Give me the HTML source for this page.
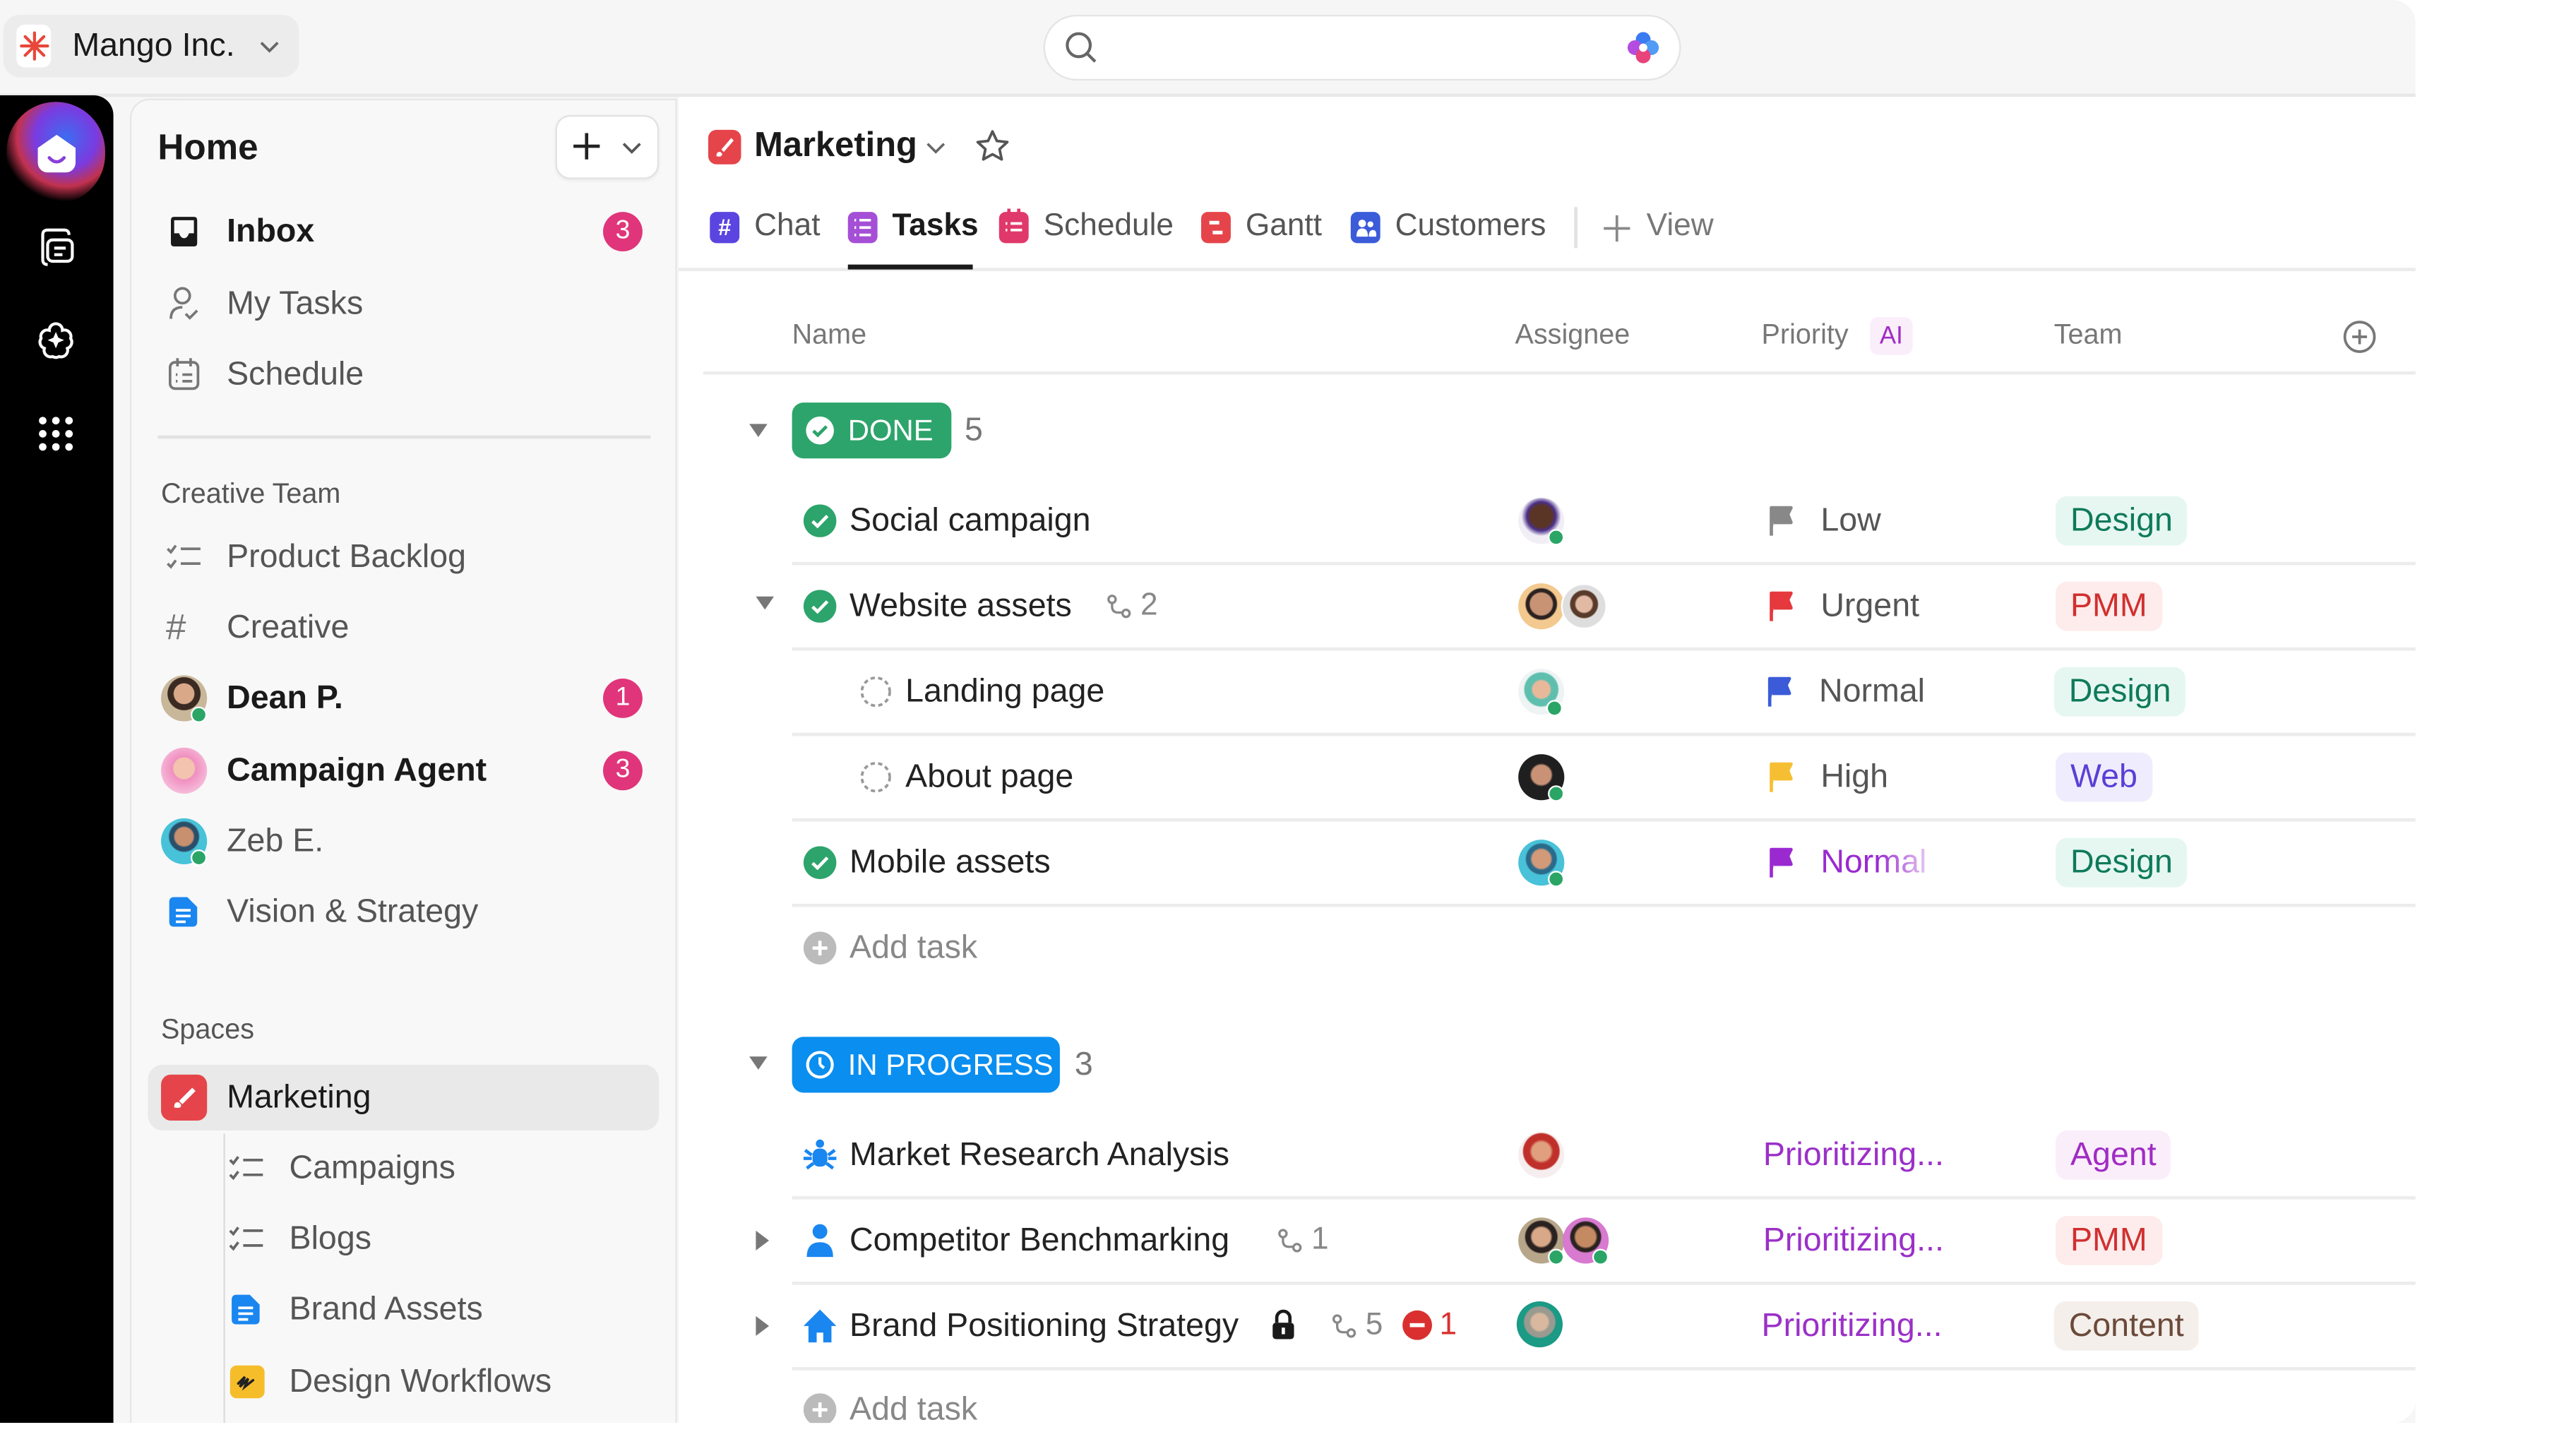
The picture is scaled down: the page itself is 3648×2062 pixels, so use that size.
<!DOCTYPE html>
<html><head><meta charset="utf-8"><style>
*{box-sizing:border-box;margin:0;padding:0}
html,body{width:3648px;height:2052px;overflow:hidden;background:#fff}
#s{position:absolute;left:0;top:0;width:1570px;height:882px;transform:scale(2.327);transform-origin:0 0;font-family:"Liberation Sans",sans-serif;color:#222}
.a{position:absolute}
.t{position:absolute;line-height:30px;height:30px;white-space:nowrap}
.sb{font-size:20px;color:#555}
.mn{font-size:20px;color:#222}
.badge{position:absolute;width:24px;height:24px;border-radius:12px;background:#e0357a;color:#fff;font-size:16px;line-height:24px;text-align:center}
.hl{position:absolute;height:2px;background:#ececec}
.tag{position:absolute;height:30px;line-height:30px;border-radius:7px;padding:0 9px;font-size:20px}
.av{position:absolute;width:28px;height:28px;border-radius:14px}
.on{position:absolute;width:10px;height:10px;border-radius:5px;background:#2aa566;border:1.5px solid #fff}
.pr{font-size:20px;color:#9b30c8}
</style></head><body><div id="s">
<div class="a" style="left:0;top:0;width:1470px;height:866px;background:#f6f6f6;border-top-right-radius:14px"></div>
<div class="a" style="left:2px;top:9px;width:180px;height:38px;background:#ececec;border-radius:10px"></div>
<div class="a" style="left:10px;top:15px;width:21px;height:26px;background:#fff;border-radius:5px"></div>
<svg class="a" style="left:12px;top:19px" width="18" height="18" viewBox="0 0 18 18"><g stroke="#e8473a" stroke-width="1.8" stroke-linecap="round"><path d="M9 1v16M1 9h16M3.3 3.3l11.4 11.4M14.7 3.3L3.3 14.7"/></g></svg>
<div class="t" style="left:44px;top:13px;font-size:20px;color:#1a1a1a">Mango Inc.</div>
<svg class="a" style="left:157px;top:24px" width="14" height="9" viewBox="0 0 14 9"><path d="M2 2l5 5 5-5" stroke="#666" stroke-width="1.6" fill="none"/></svg>
<div class="a" style="left:635px;top:9px;width:388px;height:40px;background:#fff;border:1px solid #e4e4e4;border-radius:20px"></div>
<svg class="a" style="left:647px;top:18px" width="22" height="22" viewBox="0 0 22 22"><circle cx="9.5" cy="9.5" r="7" stroke="#666" stroke-width="1.8" fill="none"/><path d="M14.5 14.5l5 5" stroke="#666" stroke-width="1.8"/></svg>
<svg class="a" style="left:989px;top:18px" width="22" height="22" viewBox="0 0 22 22"><circle cx="11" cy="6" r="4.5" fill="#3a7bf2"/><circle cx="6" cy="11" r="4.5" fill="#b44ce0"/><circle cx="16" cy="11" r="4.5" fill="#4f9bf5"/><circle cx="11" cy="16" r="4.5" fill="#e8437b"/><circle cx="11" cy="11" r="2.5" fill="#fff"/></svg>
<div class="hl" style="left:0;top:57px;width:1470px;background:#e8e8e8"></div>
<div class="a" style="left:0;top:58px;width:69px;height:808px;background:#000;border-top-right-radius:12px"></div>
<div class="a" style="left:4px;top:62px;width:60px;height:62px;border-radius:30px;background:radial-gradient(circle at 60% 35%,#3d6cf0 0%,#7a3be0 35%,#c2324f 55%,rgba(0,0,0,0) 72%)"></div>
<div class="a" style="left:23px;top:82px;width:23px;height:23px;background:#fff;border-radius:5px 5px 6px 6px;clip-path:polygon(50% 0,100% 35%,100% 100%,0 100%,0 35%)"></div>
<svg class="a" style="left:27px;top:94px" width="15" height="8" viewBox="0 0 15 8"><path d="M3 2q4.5 5 9 0" stroke="#8a3fd8" stroke-width="2" fill="none" stroke-linecap="round"/></svg>
<svg class="a" style="left:21px;top:137px" width="26" height="28" viewBox="0 0 26 28"><path d="M5 21V6q0-3 3-3h10q3 0 3 3" stroke="#fff" stroke-width="1.8" fill="none"/><rect x="8" y="9" width="15" height="13" rx="3" stroke="#fff" stroke-width="1.8" fill="none"/><path d="M12 14h7M12 18h5" stroke="#fff" stroke-width="1.8"/><path d="M5 21q0 3 3 3" stroke="#fff" stroke-width="1.8" fill="none"/></svg>
<svg class="a" style="left:21px;top:194px" width="26" height="26" viewBox="0 0 26 26"><path d="M13 3a4 4 0 0 1 4 4 4 4 0 0 1 5 5 4 4 0 0 1-2 6 4 4 0 0 1-5 5 4 4 0 0 1-4 0 4 4 0 0 1-5-5 4 4 0 0 1-2-6 4 4 0 0 1 5-5 4 4 0 0 1 4-4z" stroke="#fff" stroke-width="1.8" fill="none"/><path d="M13 8l1.5 3.5L18 13l-3.5 1.5L13 18l-1.5-3.5L8 13l3.5-1.5z" fill="#fff"/></svg>
<svg class="a" style="left:22px;top:252px" width="24" height="24" viewBox="0 0 24 24" fill="#fff"><circle cx="4" cy="4" r="2.3"/><circle cx="12" cy="4" r="2.3"/><circle cx="20" cy="4" r="2.3"/><circle cx="4" cy="12" r="2.3"/><circle cx="12" cy="12" r="2.3"/><circle cx="20" cy="12" r="2.3"/><circle cx="4" cy="20" r="2.3"/><circle cx="12" cy="20" r="2.3"/><circle cx="20" cy="20" r="2.3"/></svg>
<div class="a" style="left:79px;top:60px;width:333px;height:806px;background:#f8f8f8;border:1px solid #e6e6e6;border-bottom:none;border-top-left-radius:12px"></div>
<div class="t" style="left:96px;top:75px;font-size:22px;font-weight:bold;color:#1a1a1a">Home</div>
<div class="a" style="left:338px;top:70px;width:63px;height:39px;background:#fff;border:1px solid #e2e2e2;border-radius:9px;box-shadow:0 1px 2px rgba(0,0,0,.06)"></div>
<svg class="a" style="left:348px;top:80px" width="18" height="18" viewBox="0 0 18 18"><path d="M9 1v16M1 9h16" stroke="#222" stroke-width="2"/></svg>
<svg class="a" style="left:378px;top:86px" width="13" height="8" viewBox="0 0 13 8"><path d="M1.5 1.5l5 5 5-5" stroke="#555" stroke-width="1.6" fill="none"/></svg>
<svg class="a" style="left:102px;top:131px" width="20" height="20" viewBox="0 0 20 20"><path d="M4 1h12q2 0 2 2v14q0 2-2 2H4q-2 0-2-2V3q0-2 2-2z" fill="#1a1a1a"/><path d="M4 3h12v8h-3q-1 3-3 3t-3-3H4z" fill="#f8f8f8"/></svg>
<div class="t" style="left:138px;top:126px;font-size:20px;font-weight:bold;color:#1a1a1a">Inbox</div>
<div class="badge" style="left:367px;top:129px">3</div>
<svg class="a" style="left:102px;top:174px" width="20" height="22" viewBox="0 0 20 22"><circle cx="9" cy="6" r="4.5" stroke="#777" stroke-width="1.6" fill="none"/><path d="M2 20q0-7 7-7" stroke="#777" stroke-width="1.6" fill="none"/><path d="M11 17l2.5 2.5L18 15" stroke="#777" stroke-width="1.6" fill="none"/></svg>
<div class="t sb" style="left:138px;top:170px">My Tasks</div>
<svg class="a" style="left:102px;top:217px" width="20" height="22" viewBox="0 0 20 22"><rect x="1.5" y="3.5" width="17" height="16" rx="3" stroke="#777" stroke-width="1.6" fill="none"/><path d="M6 1v5M14 1v5M5 11h1M9 11h6M5 15h1M9 15h6" stroke="#777" stroke-width="1.6"/></svg>
<div class="t sb" style="left:138px;top:213px">Schedule</div>
<div class="hl" style="left:96px;top:265px;width:300px;height:1.5px;background:#e2e2e2"></div>
<div class="t" style="left:98px;top:286px;font-size:17px;color:#555">Creative Team</div>
<svg class="a" style="left:101px;top:330px" width="22" height="18" viewBox="0 0 22 18"><path d="M1 4l2 2 3-4M1 13l2 2 3-4M9 4h12M9 13h12" stroke="#777" stroke-width="1.6" fill="none"/></svg>
<div class="t sb" style="left:138px;top:324px">Product Backlog</div>
<div class="t" style="left:101px;top:367px;font-size:22px;color:#777">#</div>
<div class="t sb" style="left:138px;top:367px">Creative</div>
<div class="av" style="left:98px;top:411px;background:radial-gradient(circle at 50% 40%,#d9a888 0 28%,#3a2a22 30% 45%,#c9b79a 47%)"></div>
<div class="on" style="left:116px;top:430px"></div>
<div class="t" style="left:138px;top:410px;font-size:20px;font-weight:bold;color:#1a1a1a">Dean P.</div>
<div class="badge" style="left:367px;top:413px">1</div>
<div class="av" style="left:98px;top:455px;background:radial-gradient(circle at 50% 45%,#f3c3b0 0 30%,#f08fc0 34%,#f6b8d8 70%)"></div>
<div class="t" style="left:138px;top:454px;font-size:20px;font-weight:bold;color:#1a1a1a">Campaign Agent</div>
<div class="badge" style="left:367px;top:457px">3</div>
<div class="av" style="left:98px;top:498px;background:radial-gradient(circle at 50% 40%,#c8906e 0 25%,#2a4e6a 30% 40%,#48c2d8 44%)"></div>
<div class="on" style="left:116px;top:517px"></div>
<div class="t sb" style="left:138px;top:497px">Zeb E.</div>
<svg class="a" style="left:102px;top:545px" width="20" height="20" viewBox="0 0 20 20"><path d="M4 1h8l6 6v9q0 3-3 3H4q-3 0-3-3V4q0-3 3-3z" fill="#1a86f0"/><path d="M5 9h9M5 12.5h9M5 16h6" stroke="#fff" stroke-width="1.6"/></svg>
<div class="t sb" style="left:138px;top:540px">Vision &amp; Strategy</div>
<div class="t" style="left:98px;top:612px;font-size:17px;color:#555">Spaces</div>
<div class="a" style="left:90px;top:648px;width:311px;height:40px;background:#e9e9e9;border-radius:9px"></div>
<div class="a" style="left:98px;top:654px;width:28px;height:28px;background:#e5454a;border-radius:6px"></div>
<svg class="a" style="left:102px;top:658px" width="20" height="20" viewBox="0 0 20 20"><path d="M15 4L7 12l2 2 8-8z" fill="#fff"/><path d="M4 16q0-4 3-3l1 1q1 3-4 2z" fill="#fff"/></svg>
<div class="t" style="left:138px;top:653px;font-size:20px;color:#1a1a1a">Marketing</div>
<div class="a" style="left:135.5px;top:690px;width:1.5px;height:176px;background:#dcdcdc"></div>
<svg class="a" style="left:139px;top:702px" width="22" height="18" viewBox="0 0 22 18"><path d="M1 4l2 2 3-4M1 13l2 2 3-4M9 4h12M9 13h12" stroke="#666" stroke-width="1.6" fill="none"/></svg>
<div class="t sb" style="left:176px;top:696px">Campaigns</div>
<svg class="a" style="left:139px;top:745px" width="22" height="18" viewBox="0 0 22 18"><path d="M1 4l2 2 3-4M1 13l2 2 3-4M9 4h12M9 13h12" stroke="#666" stroke-width="1.6" fill="none"/></svg>
<div class="t sb" style="left:176px;top:739px">Blogs</div>
<svg class="a" style="left:140px;top:787px" width="20" height="20" viewBox="0 0 20 20"><path d="M4 1h8l6 6v9q0 3-3 3H4q-3 0-3-3V4q0-3 3-3z" fill="#1a86f0"/><path d="M5 9h9M5 12.5h9M5 16h6" stroke="#fff" stroke-width="1.6"/></svg>
<div class="t sb" style="left:176px;top:782px">Brand Assets</div>
<div class="a" style="left:140px;top:831px;width:21px;height:20px;background:#f6bd2b;border-radius:4px"></div>
<svg class="a" style="left:142px;top:833px" width="17" height="16" viewBox="0 0 17 16"><path d="M3 9l4-4-3 6 5-5-2 5 5-4" stroke="#222" stroke-width="1.5" fill="none" stroke-linecap="round"/></svg>
<div class="t sb" style="left:176px;top:826px">Design Workflows</div>
<div class="a" style="left:413px;top:59px;width:1057px;height:807px;background:#fff;border-bottom-right-radius:14px"></div>
<div class="a" style="left:431px;top:79px;width:20px;height:21px;background:#e5454a;border-radius:5px"></div>
<svg class="a" style="left:433px;top:81px" width="16" height="17" viewBox="0 0 16 17"><path d="M12 3L6 10l1.5 1.5 6-7z" fill="#fff"/><path d="M3 14q0-3 2.5-2.5l1 1q0 2.5-3.5 1.5z" fill="#fff"/></svg>
<div class="t" style="left:459px;top:74px;font-size:21px;font-weight:bold;color:#1a1a1a">Marketing</div>
<svg class="a" style="left:563px;top:86px" width="13" height="8" viewBox="0 0 13 8"><path d="M1.5 1.5l5 5 5-5" stroke="#666" stroke-width="1.5" fill="none"/></svg>
<svg class="a" style="left:593px;top:78px" width="22" height="22" viewBox="0 0 22 22"><path d="M11 2l2.7 5.8 6.3.7-4.7 4.3 1.3 6.2L11 15.9 5.4 19l1.3-6.2L2 8.5l6.3-.7z" stroke="#555" stroke-width="1.6" fill="none" stroke-linejoin="round"/></svg>
<div class="a" style="left:432px;top:129px;width:18px;height:19px;background:#5b45e0;border-radius:4px;color:#fff;font-size:14px;line-height:19px;text-align:center;font-weight:bold">#</div>
<div class="t" style="left:459px;top:123px;font-size:19px;color:#555">Chat</div>
<div class="a" style="left:516px;top:129px;width:18px;height:19px;background:#a54fd6;border-radius:4px"></div>
<svg class="a" style="left:518px;top:131px" width="14" height="15" viewBox="0 0 14 15"><path d="M2 3h1M5 3h7M2 7.5h1M5 7.5h7M2 12h1M5 12h7" stroke="#fff" stroke-width="1.6"/></svg>
<div class="t" style="left:543px;top:123px;font-size:19px;color:#1a1a1a;font-weight:bold">Tasks</div>
<div class="a" style="left:608px;top:129px;width:18px;height:19px;background:#e0386a;border-radius:4px"></div>
<svg class="a" style="left:610px;top:126px" width="14" height="20" viewBox="0 0 14 20"><path d="M4 1v5M10 1v5" stroke="#e0386a" stroke-width="2"/><path d="M2 10h1M5 10h7M2 14h1M5 14h7" stroke="#fff" stroke-width="1.6"/></svg>
<div class="t" style="left:635px;top:123px;font-size:19px;color:#555">Schedule</div>
<div class="a" style="left:731px;top:129px;width:18px;height:19px;background:#e5454a;border-radius:4px"></div>
<svg class="a" style="left:733px;top:131px" width="14" height="15" viewBox="0 0 14 15"><path d="M3 4.5h6M5 10.5h6" stroke="#fff" stroke-width="2.2"/></svg>
<div class="t" style="left:758px;top:123px;font-size:19px;color:#555">Gantt</div>
<div class="a" style="left:822px;top:129px;width:18px;height:19px;background:#3b5bd9;border-radius:4px"></div>
<svg class="a" style="left:824px;top:131px" width="14" height="15" viewBox="0 0 14 15"><circle cx="5" cy="5" r="2.3" fill="#fff"/><path d="M1.5 13q0-5 3.5-5t3.5 5z" fill="#fff"/><circle cx="10" cy="5.5" r="1.8" fill="#fff"/><path d="M9 13q0-4 2.5-4t2 4z" fill="#fff"/></svg>
<div class="t" style="left:849px;top:123px;font-size:19px;color:#555">Customers</div>
<div class="a" style="left:958px;top:126px;width:1.5px;height:25px;background:#e2e2e2"></div>
<svg class="a" style="left:975px;top:130px" width="18" height="18" viewBox="0 0 18 18"><path d="M9 1v16M1 9h16" stroke="#888" stroke-width="1.6"/></svg>
<div class="t" style="left:1002px;top:123px;font-size:19px;color:#777">View</div>
<div class="hl" style="left:413px;top:163px;width:1057px;background:#ebebeb"></div>
<div class="a" style="left:516px;top:161px;width:76px;height:3px;background:#1a1a1a"></div>
<div class="t" style="left:482px;top:189px;font-size:17px;color:#777">Name</div>
<div class="t" style="left:922px;top:189px;font-size:17px;color:#777">Assignee</div>
<div class="t" style="left:1072px;top:189px;font-size:17px;color:#777">Priority</div>
<div class="a" style="left:1138px;top:193px;width:26px;height:23px;background:#fbeefb;border-radius:5px;color:#a02cc3;font-size:15px;line-height:23px;text-align:center">AI</div>
<div class="t" style="left:1250px;top:189px;font-size:17px;color:#777">Team</div>
<svg class="a" style="left:1425px;top:194px" width="22" height="22" viewBox="0 0 22 22"><circle cx="11" cy="11" r="9" stroke="#777" stroke-width="1.6" fill="none"/><path d="M11 6.5v9M6.5 11h9" stroke="#777" stroke-width="1.6"/></svg>
<div class="hl" style="left:428px;top:226px;width:1042px"></div>
<svg class="a" style="left:455px;top:257px" width="13" height="10" viewBox="0 0 13 10"><path d="M1 1h11L6.5 9z" fill="#777"/></svg>
<div class="a" style="left:482px;top:245px;width:97px;height:34px;background:#2da46b;border-radius:7px"></div>
<svg class="a" style="left:490px;top:253px" width="18" height="18" viewBox="0 0 18 18"><circle cx="9" cy="9" r="8.5" fill="#fff"/><path d="M5 9.2l2.7 2.6L13 6.5" stroke="#2da46b" stroke-width="2" fill="none"/></svg>
<div class="t" style="left:516px;top:247px;font-size:18px;color:#fff">DONE</div>
<div class="t" style="left:587px;top:247px;font-size:20px;color:#777">5</div>
<svg width="0" height="0" style="position:absolute"><defs><symbol id="ck" viewBox="0 0 20 20"><circle cx="10" cy="10" r="10" fill="#2da46b"/><path d="M5.5 10.3l3 2.9L14.5 7" stroke="#fff" stroke-width="2" fill="none"/></symbol><symbol id="oc" viewBox="0 0 20 20"><circle cx="10" cy="10" r="8.5" stroke="#999" stroke-width="1.6" fill="none" stroke-dasharray="2.6 2"/></symbol><symbol id="fl" viewBox="0 0 18 20"><path d="M2 19V2h12l-2 4 2 5H3.5" fill="currentColor" stroke="currentColor" stroke-width="2" stroke-linejoin="round"/></symbol><symbol id="sub" viewBox="0 0 18 18"><circle cx="4" cy="4" r="2.3" stroke="#888" stroke-width="1.5" fill="none"/><circle cx="13" cy="13" r="2.3" stroke="#888" stroke-width="1.5" fill="none"/><path d="M4 6.5v2q0 4 4 4h2.5" stroke="#888" stroke-width="1.5" fill="none"/></symbol><symbol id="tr" viewBox="0 0 10 14"><path d="M1 1l8 6-8 6z" fill="#777"/></symbol><symbol id="pl" viewBox="0 0 20 20"><circle cx="10" cy="10" r="10" fill="#bbb"/><path d="M10 5.5v9M5.5 10h9" stroke="#fff" stroke-width="2"/></symbol></defs></svg>
<svg class="a" style="left:489px;top:307px" width="20" height="20"><use href="#ck"/></svg>
<div class="t mn" style="left:517px;top:302px">Social campaign</div>
<div class="av" style="left:924px;top:303px;background:radial-gradient(circle at 50% 40%,#5a3424 0 30%,#4a2f8a 40%,#f1eef5 55%)"></div>
<div class="on" style="left:942px;top:322px"></div>
<svg class="a" style="left:1076px;top:307px;color:#888" width="18" height="20"><use href="#fl"/></svg>
<div class="t" style="left:1108px;top:302px;font-size:20px;color:#555">Low</div>
<div class="tag" style="left:1251px;top:302px;background:#e6f7f1;color:#0f7a5a">Design</div>
<div class="hl" style="left:482px;top:342px;width:988px"></div>
<svg class="a" style="left:459px;top:362px" width="13" height="10" viewBox="0 0 13 10"><path d="M1 1h11L6.5 9z" fill="#777"/></svg>
<svg class="a" style="left:489px;top:359px" width="20" height="20"><use href="#ck"/></svg>
<div class="t mn" style="left:517px;top:354px">Website assets</div>
<svg class="a" style="left:673px;top:361px" width="17" height="17"><use href="#sub"/></svg>
<div class="t" style="left:694px;top:354px;font-size:19px;color:#888">2</div>
<div class="av" style="left:924px;top:355px;background:radial-gradient(circle at 50% 45%,#c89274 0 32%,#2a2220 36% 44%,#f3c98f 48%)"></div>
<div class="av" style="left:950px;top:355px;background:radial-gradient(circle at 50% 45%,#e2b9a2 0 25%,#5a3a2a 30% 42%,#dedede 46%);border:1px solid #fff"></div>
<svg class="a" style="left:1076px;top:359px;color:#e5393d" width="18" height="20"><use href="#fl"/></svg>
<div class="t" style="left:1108px;top:354px;font-size:20px;color:#555">Urgent</div>
<div class="tag" style="left:1251px;top:354px;background:#fdeceb;color:#d12f2f">PMM</div>
<div class="hl" style="left:482px;top:394px;width:988px"></div>
<svg class="a" style="left:523px;top:411px" width="20" height="20"><use href="#oc"/></svg>
<div class="t mn" style="left:551px;top:406px">Landing page</div>
<div class="av" style="left:924px;top:407px;background:radial-gradient(circle at 50% 45%,#e8b89a 0 25%,#5fbfae 30% 48%,#eef3f3 52%)"></div>
<div class="on" style="left:941px;top:426px"></div>
<svg class="a" style="left:1075px;top:411px;color:#3b5bd9" width="18" height="20"><use href="#fl"/></svg>
<div class="t" style="left:1107px;top:406px;font-size:20px;color:#555">Normal</div>
<div class="tag" style="left:1250px;top:406px;background:#e6f7f1;color:#0f7a5a">Design</div>
<div class="hl" style="left:482px;top:446px;width:988px"></div>
<svg class="a" style="left:523px;top:463px" width="20" height="20"><use href="#oc"/></svg>
<div class="t mn" style="left:551px;top:458px">About page</div>
<div class="av" style="left:924px;top:459px;background:radial-gradient(circle at 50% 45%,#c99276 0 28%,#1f1f1f 34%)"></div>
<div class="on" style="left:942px;top:478px"></div>
<svg class="a" style="left:1076px;top:463px;color:#f6bf33" width="18" height="20"><use href="#fl"/></svg>
<div class="t" style="left:1108px;top:458px;font-size:20px;color:#555">High</div>
<div class="tag" style="left:1251px;top:458px;background:#efedfd;color:#5b3fd6">Web</div>
<div class="hl" style="left:482px;top:498px;width:988px"></div>
<svg class="a" style="left:489px;top:515px" width="20" height="20"><use href="#ck"/></svg>
<div class="t mn" style="left:517px;top:510px">Mobile assets</div>
<div class="av" style="left:924px;top:511px;background:radial-gradient(circle at 50% 42%,#d29a78 0 26%,#2a6a8a 32% 42%,#48c2d8 46%)"></div>
<div class="on" style="left:942px;top:530px"></div>
<svg class="a" style="left:1076px;top:515px;color:#9a2ad0" width="18" height="20"><use href="#fl"/></svg>
<div class="t" style="left:1108px;top:510px;font-size:20px;background:linear-gradient(90deg,#9a2ad0 55%,#e5c5f0);-webkit-background-clip:text;color:transparent">Normal</div>
<div class="tag" style="left:1251px;top:510px;background:#e6f7f1;color:#0f7a5a">Design</div>
<div class="hl" style="left:482px;top:550px;width:988px"></div>
<svg class="a" style="left:489px;top:567px" width="20" height="20"><use href="#pl"/></svg>
<div class="t" style="left:517px;top:562px;font-size:20px;color:#888">Add task</div>
<svg class="a" style="left:455px;top:642px" width="13" height="10" viewBox="0 0 13 10"><path d="M1 1h11L6.5 9z" fill="#777"/></svg>
<div class="a" style="left:482px;top:631px;width:163px;height:34px;background:#0a8ef0;border-radius:7px"></div>
<svg class="a" style="left:490px;top:639px" width="18" height="18" viewBox="0 0 18 18"><circle cx="9" cy="9" r="7.5" stroke="#fff" stroke-width="1.8" fill="none"/><path d="M9 9V4.5M9 9l2.5 2" stroke="#fff" stroke-width="1.8"/></svg>
<div class="t" style="left:516px;top:633px;font-size:18px;color:#fff">IN PROGRESS</div>
<div class="t" style="left:654px;top:633px;font-size:20px;color:#777">3</div>
<svg class="a" style="left:488px;top:692px" width="22" height="22" viewBox="0 0 22 22"><circle cx="11" cy="4" r="2.5" fill="#1a86f0"/><rect x="6.5" y="7" width="9" height="11" rx="4" fill="#1a86f0"/><path d="M2 8l4 3M20 8l-4 3M1 13h5M21 13h-5M3 19l4-3M19 19l-4-3" stroke="#1a86f0" stroke-width="2"/></svg>
<div class="t mn" style="left:517px;top:688px">Market Research Analysis</div>
<div class="av" style="left:924px;top:689px;background:radial-gradient(circle at 50% 42%,#e0a080 0 26%,#c0302a 34% 50%,#f6eeee 54%)"></div>
<div class="t pr" style="left:1073px;top:688px">Prioritizing...</div>
<div class="tag" style="left:1251px;top:688px;background:#fbeefb;color:#a02cc3">Agent</div>
<div class="hl" style="left:482px;top:728px;width:988px"></div>
<svg class="a" style="left:459px;top:748px" width="10" height="14"><use href="#tr"/></svg>
<svg class="a" style="left:489px;top:744px" width="20" height="22" viewBox="0 0 20 22"><circle cx="10" cy="5.5" r="4.5" fill="#1a86f0"/><path d="M2 21q0-9 8-9t8 9z" fill="#1a86f0"/></svg>
<div class="t mn" style="left:517px;top:740px">Competitor Benchmarking</div>
<svg class="a" style="left:777px;top:747px" width="17" height="17"><use href="#sub"/></svg>
<div class="t" style="left:798px;top:740px;font-size:19px;color:#888">1</div>
<div class="av" style="left:924px;top:741px;background:radial-gradient(circle at 50% 42%,#d9a888 0 26%,#2a2220 32% 44%,#b8a68a 48%)"></div>
<div class="on" style="left:942px;top:760px"></div>
<div class="av" style="left:951px;top:741px;background:radial-gradient(circle at 50% 42%,#c48a62 0 28%,#2a2220 34% 42%,#d77ad0 46%)"></div>
<div class="on" style="left:969px;top:760px"></div>
<div class="t pr" style="left:1073px;top:740px">Prioritizing...</div>
<div class="tag" style="left:1251px;top:740px;background:#fdeceb;color:#d12f2f">PMM</div>
<div class="hl" style="left:482px;top:780px;width:988px"></div>
<svg class="a" style="left:459px;top:800px" width="10" height="14"><use href="#tr"/></svg>
<svg class="a" style="left:488px;top:796px" width="22" height="22" viewBox="0 0 22 22"><path d="M11 1L1 11h3v10h5v-6h4v6h5V11h3z" fill="#1a86f0"/></svg>
<div class="t mn" style="left:517px;top:792px">Brand Positioning Strategy</div>
<svg class="a" style="left:773px;top:797px" width="16" height="19" viewBox="0 0 16 19"><path d="M4 8V5a4 4 0 0 1 8 0v3" stroke="#1a1a1a" stroke-width="2" fill="none"/><rect x="1.5" y="8" width="13" height="10" rx="2" fill="#1a1a1a"/><rect x="7" y="11" width="2" height="4" fill="#fff"/></svg>
<svg class="a" style="left:810px;top:799px" width="17" height="17"><use href="#sub"/></svg>
<div class="t" style="left:831px;top:792px;font-size:19px;color:#888">5</div>
<svg class="a" style="left:853px;top:797px" width="19" height="19" viewBox="0 0 19 19"><circle cx="9.5" cy="9.5" r="9" fill="#d9302f"/><path d="M5 9.5h9" stroke="#fff" stroke-width="2.4"/></svg>
<div class="t" style="left:876px;top:792px;font-size:19px;color:#d9302f">1</div>
<div class="av" style="left:923px;top:792px;background:radial-gradient(circle at 50% 45%,#d9b8a0 0 24%,#9a9a90 30% 44%,#1b9a85 48%)"></div>
<div class="t pr" style="left:1072px;top:792px">Prioritizing...</div>
<div class="tag" style="left:1250px;top:792px;background:#f5efeb;color:#6b4a3a">Content</div>
<div class="hl" style="left:482px;top:832px;width:988px"></div>
<svg class="a" style="left:489px;top:848px" width="20" height="20"><use href="#pl"/></svg>
<div class="t" style="left:517px;top:843px;font-size:20px;color:#888">Add task</div>
<div class="a" style="left:0;top:866px;width:1570px;height:20px;background:#fff"></div>
</div></body></html>
